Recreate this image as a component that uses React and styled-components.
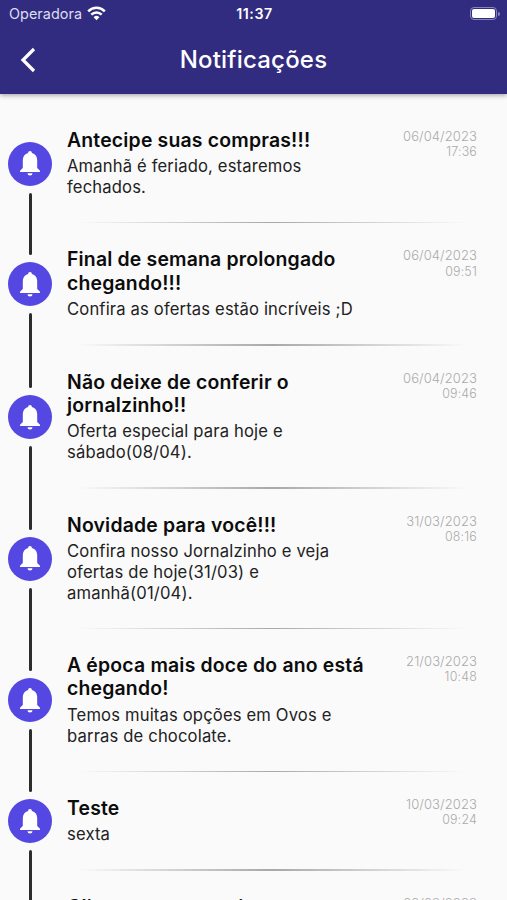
import React from 'react';
import styled, { createGlobalStyle } from 'styled-components';

const notifications = [
    {
        title: ['Antecipe suas compras!!!'],
        body: ['Amanhã é feriado, estaremos', 'fechados.'],
        date: '06/04/2023',
        time: '17:36',
    },
    {
        title: ['Final de semana prolongado', 'chegando!!!'],
        body: ['Confira as ofertas estão incríveis ;D'],
        date: '06/04/2023',
        time: '09:51',
    },
    {
        title: ['Não deixe de conferir o', 'jornalzinho!!'],
        body: ['Oferta especial para hoje e', 'sábado(08/04).'],
        date: '06/04/2023',
        time: '09:46',
    },
    {
        title: ['Novidade para você!!!'],
        body: ['Confira nosso Jornalzinho e veja', 'ofertas de hoje(31/03) e', 'amanhã(01/04).'],
        date: '31/03/2023',
        time: '08:16',
    },
    {
        title: ['A época mais doce do ano está', 'chegando!'],
        body: ['Temos muitas opções em Ovos e', 'barras de chocolate.'],
        date: '21/03/2023',
        time: '10:48',
    },
    {
        title: ['Teste'],
        body: ['sexta'],
        date: '10/03/2023',
        time: '09:24',
    },
    {
        title: ['Clique este anuncio', 'confira!!!'],
        body: ['Temos ofertas especiais para', 'você.'],
        date: '08/03/2023',
        time: '09:20',
    },
];

const WifiIcon = () => (
    <svg width="19" height="15" viewBox="0 0 19 15" fill="none" stroke="#fff" strokeWidth="2.5">
        <path d="M1.200 5.400C6 .6 13 .6 17.800 5.400" />
        <path d="M4.300 8.600c3-2.900 7.400-2.900 10.400 0" />
        <path d="M9.500 14.200l-2.900-3a4.200 4.200 0 0 1 5.800 0z" fill="#fff" stroke="none" />
    </svg>
);

const BackIcon = () => (
    <svg width="16" height="26" viewBox="0 0 16 26" fill="none" stroke="#fff" strokeWidth="3.2">
        <path d="M14 2L3 13l11 11" />
    </svg>
);

const BellIcon = () => (
    <svg width="20" height="25" viewBox="0 0 20 25" fill="#fff">
        <path d="M10 0c1.200 0 1.900.8 1.900 2 3.300.9 5.300 3.700 5.300 7.200v7.800l2.800 2.800v1.300H0v-1.300l2.800-2.800V9.200C2.800 5.700 4.800 2.900 8.100 2 8.100.8 8.800 0 10 0z" />
        <path d="M7.500 22.300h5a2.500 2.300 0 0 1-5 0z" />
    </svg>
);

const App = () => (
    <>
        <GlobalStyle />
        <Screen>
            <Header>
                <StatusBar>
                    <Carrier>
                        Operadora
                        <WifiIcon />
                    </Carrier>
                    <Clock>11:37</Clock>
                    <BatterySlot>
                        <Battery />
                        <BatteryTip />
                    </BatterySlot>
                </StatusBar>
                <NavBar>
                    <BackIcon />
                    <PageTitle>Notificações</PageTitle>
                </NavBar>
            </Header>
            <List>
                {notifications.map((item, i) => (
                    <Row key={i}>
                        <Timeline>
                            <Line $hidden={i === 0} />
                            <Badge>
                                <BellIcon />
                            </Badge>
                            <Line $bottom />
                        </Timeline>
                        <Content>
                            <Message>
                                {item.title.map((line) => (
                                    <Title key={line}>{line}</Title>
                                ))}
                                <Body>
                                    {item.body.map((line) => (
                                        <div key={line}>{line}</div>
                                    ))}
                                </Body>
                            </Message>
                            <When>
                                <DateText>{item.date}</DateText>
                                <TimeText>{item.time}</TimeText>
                            </When>
                            <Divider />
                        </Content>
                    </Row>
                ))}
            </List>
        </Screen>
    </>
);

export default App;

const GlobalStyle = createGlobalStyle`
    body {
        margin: 0;
        background: #fafafa;
        overflow: hidden;
    }
`;
const Screen = styled.div`
    display: flex;
    flex-direction: column;
    height: 900px;
    overflow: hidden;
    color: #0c0c0c;
    background: #fafafa;
    font-family: Inter, 'Liberation Sans', sans-serif;
    white-space: nowrap;
`;
const Header = styled.header`
    flex: none;
    height: 94px;
    color: #fff;
    background: #322c80;
    box-shadow: 0 1px 5px rgba(0, 0, 0, 0.4);
`;
const StatusBar = styled.div`
    display: grid;
    grid-template-columns: 1fr auto 1fr;
    align-items: center;
    height: 27px;
    padding: 0 7px 0 9px;
`;
const Carrier = styled.div`
    display: flex;
    align-items: center;
    gap: 5px;
    color: #dddcf0;
    font-size: 14.4px;
    letter-spacing: 0.05px;
`;
const Clock = styled.div`
    font-size: 14.2px;
    font-weight: 600;
    letter-spacing: 0.6px;
`;
const BatterySlot = styled.div`
    display: flex;
    align-items: center;
    justify-content: flex-end;
    gap: 1px;
`;
const Battery = styled.div`
    width: 23px;
    height: 9px;
    border: 1px solid #8985b8;
    border-radius: 4px;
    padding: 1px;
    background: #fff content-box;
`;
const BatteryTip = styled.div`
    width: 2px;
    height: 4px;
    border-radius: 0 2px 2px 0;
    background: #8985b8;
`;
const NavBar = styled.div`
    display: grid;
    grid-template-columns: 16px 1fr 16px;
    align-items: center;
    height: 65px;
    padding: 0 20px;
`;
const PageTitle = styled.h1`
    margin: 0;
    font-size: 24px;
    font-weight: 500;
    text-align: center;
    letter-spacing: 0.2px;
`;
const List = styled.main`
    padding: 9.800px 0 0 8px;
`;
const Row = styled.div`
    display: flex;
`;
const Timeline = styled.div`
    display: flex;
    flex: none;
    flex-direction: column;
    align-items: center;
    width: 44px;
`;
const Line = styled.div`
    flex: 1;
    width: 3px;
    border-radius: ${(props) => (props.$bottom ? '2px 2px 0 0' : '0 0 2px 2px')};
    background: ${(props) => (props.$hidden ? 'transparent' : '#2b2d2c')};
`;
const Badge = styled.div`
    display: flex;
    flex: none;
    align-items: center;
    justify-content: center;
    width: 44px;
    height: 44px;
    margin: 7px 0;
    border-radius: 50%;
    background: #5447e2;
`;
const Content = styled.div`
    display: grid;
    flex: 1;
    grid-template-columns: 1fr auto;
    padding: 25px 30px 0 15px;
`;
const Message = styled.div`
    padding-bottom: 24.200px;
`;
const Title = styled.div`
    font-size: 19.4px;
    font-weight: 600;
    line-height: 23.4px;
    letter-spacing: 0.19px;
`;
const Body = styled.div`
    padding-top: 4px;
    color: #222;
    font-size: 16.6px;
    line-height: 20.8px;
    letter-spacing: 0.16px;
`;
const When = styled.div`
    color: #aaa;
    font-weight: 300;
    text-align: right;
`;
const DateText = styled.div`
    font-size: 13px;
    line-height: 15.2px;
    letter-spacing: 0.1px;
`;
const TimeText = styled.div`
    font-size: 12.4px;
    line-height: 16.6px;
    letter-spacing: 0.2px;
`;
const Divider = styled.div`
    grid-column: 1 / -1;
    height: 1.4px;
    margin: 0 10px;
    background: linear-gradient(90deg, transparent, #a8a8a8 50%, transparent);
`;
